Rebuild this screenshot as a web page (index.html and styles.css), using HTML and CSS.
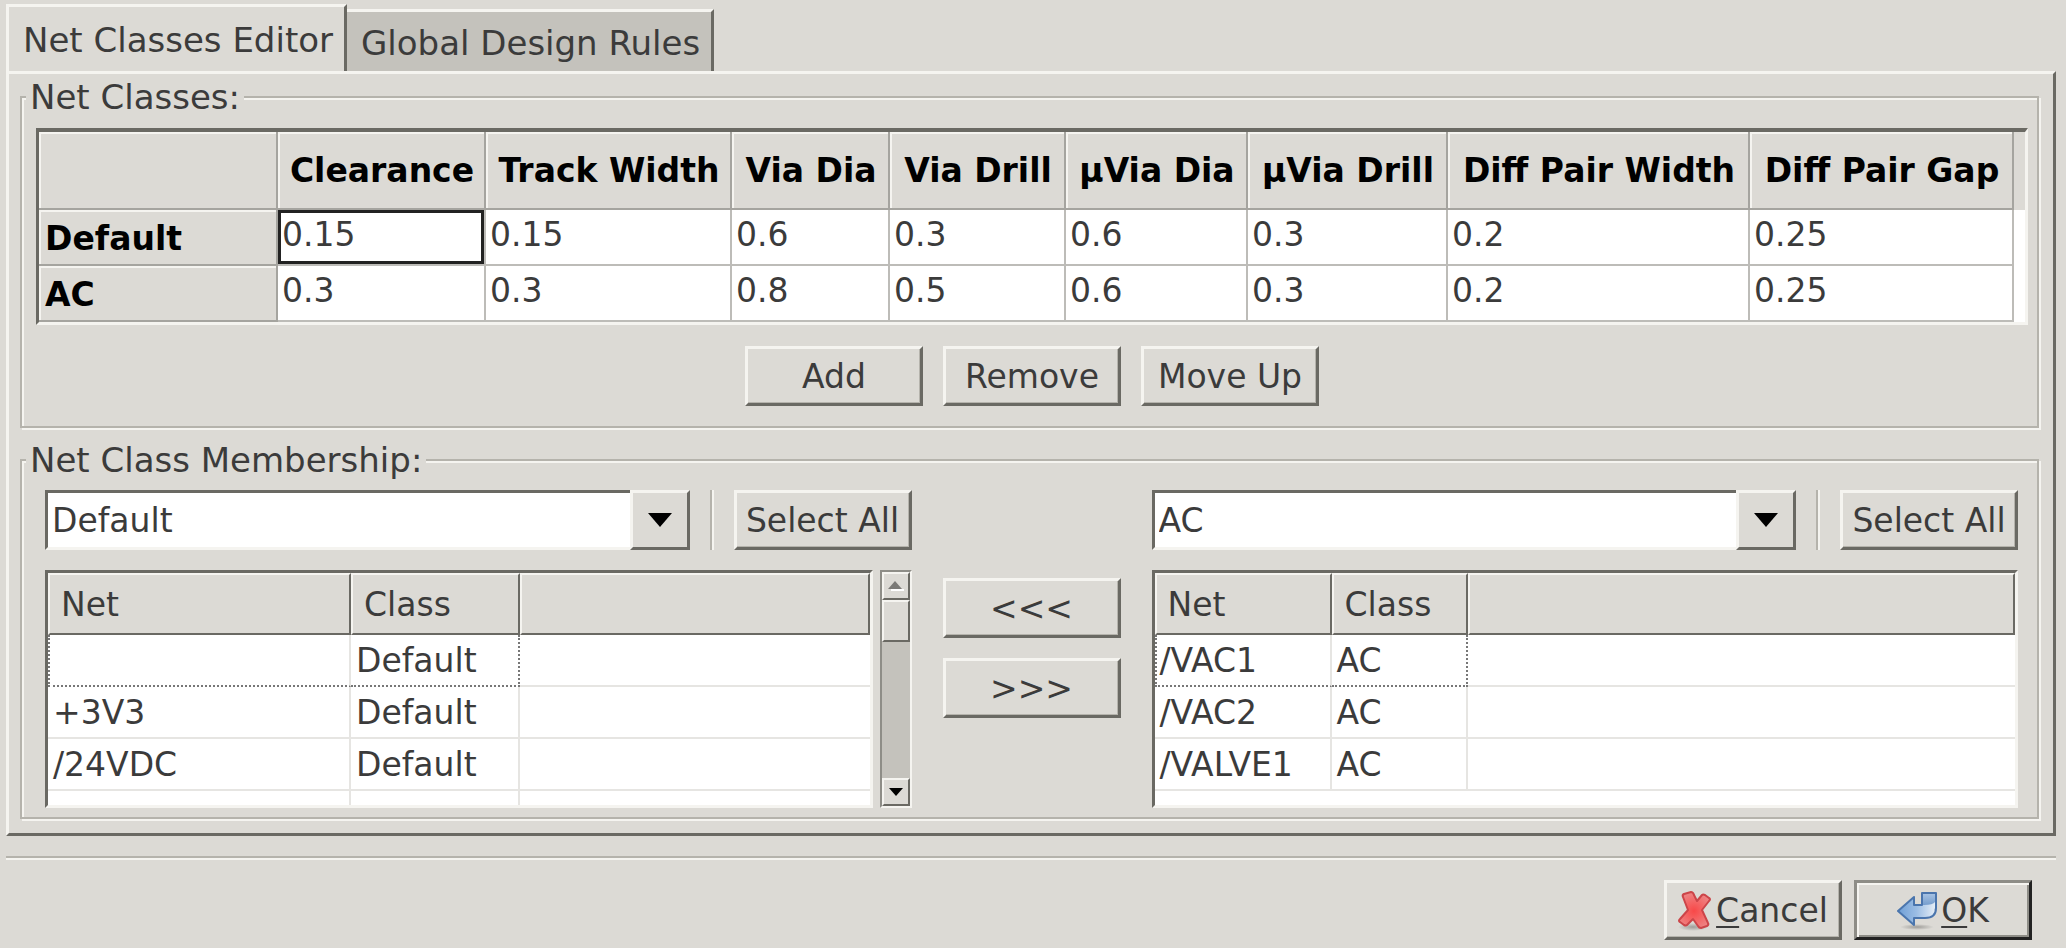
FILE: index.html
```html
<!DOCTYPE html>
<html lang="en">
<head>
<meta charset="utf-8">
<title>Net Classes Editor</title>
<link rel="stylesheet" href="styles.css">
</head>
<body>
<div class="tabs" role="tablist">
  <button class="tab tab-active" role="tab" aria-selected="true" type="button">Net Classes Editor</button>
  <button class="tab" role="tab" aria-selected="false" type="button">Global Design Rules</button>
</div>
<main class="panel">
  <fieldset class="group">
    <legend>Net Classes:</legend>
    <div class="grid-frame">
      <table class="grid">
        <colgroup>
          <col class="g0"><col class="g1"><col class="g2"><col class="g3"><col class="g4"><col class="g5"><col class="g6"><col class="g7"><col class="g8"><col>
        </colgroup>
        <thead>
          <tr><td class="corner"></td><th>Clearance</th><th>Track Width</th><th>Via Dia</th><th>Via Drill</th><th>µVia Dia</th><th>µVia Drill</th><th>Diff Pair Width</th><th>Diff Pair Gap</th><td class="rest"></td></tr>
        </thead>
        <tbody>
          <tr><th scope="row">Default</th><td class="cursor">0.15</td><td>0.15</td><td>0.6</td><td>0.3</td><td>0.6</td><td>0.3</td><td>0.2</td><td>0.25</td><td class="blank"></td></tr>
          <tr><th scope="row">AC</th><td>0.3</td><td>0.3</td><td>0.8</td><td>0.5</td><td>0.6</td><td>0.3</td><td>0.2</td><td>0.25</td><td class="blank"></td></tr>
        </tbody>
      </table>
    </div>
    <div class="actions">
      <button class="btn" type="button">Add</button>
      <button class="btn" type="button">Remove</button>
      <button class="btn" type="button">Move Up</button>
    </div>
  </fieldset>

  <fieldset class="group members">
    <legend>Net Class Membership:</legend>
    <section class="side">
      <div class="picker">
        <div class="combo">
          <select aria-label="Left net class"><option>Default</option><option>AC</option></select>
          <span class="combo-arrow"><svg width="24" height="14" viewBox="0 0 24 14"><path d="M0 0H24L12 14Z"/></svg></span>
        </div>
        <span class="vline"></span>
        <button class="btn" type="button">Select All</button>
      </div>
      <div class="list-row">
        <div class="list">
          <table class="nets">
            <colgroup><col class="n-left"><col class="c-left"><col></colgroup>
            <thead><tr><th>Net</th><th>Class</th><th></th></tr></thead>
            <tbody>
              <tr class="current"><td></td><td>Default</td><td></td></tr>
              <tr><td>+3V3</td><td>Default</td><td></td></tr>
              <tr><td>/24VDC</td><td>Default</td><td></td></tr>
              <tr><td></td><td></td><td></td></tr>
            </tbody>
          </table>
        </div>
        <div class="scrollbar">
          <button class="step" type="button" aria-label="Scroll up" disabled><svg width="16" height="12" viewBox="0 0 16 12"><path d="M3 9H16V11H3Z" fill="#fff"/><path d="M0 9H14L7 1Z" fill="#7b7a77"/></svg></button>
          <div class="thumb"></div>
          <div class="trough"></div>
          <button class="step" type="button" aria-label="Scroll down"><svg width="14" height="8" viewBox="0 0 14 8"><path d="M0 0H14L7 8Z"/></svg></button>
        </div>
      </div>
    </section>
    <div class="movers">
      <button class="btn" type="button">&lt;&lt;&lt;</button>
      <button class="btn" type="button">&gt;&gt;&gt;</button>
    </div>
    <section class="side">
      <div class="picker">
        <div class="combo">
          <select aria-label="Right net class"><option>AC</option><option>Default</option></select>
          <span class="combo-arrow"><svg width="24" height="14" viewBox="0 0 24 14"><path d="M0 0H24L12 14Z"/></svg></span>
        </div>
        <span class="vline"></span>
        <button class="btn" type="button">Select All</button>
      </div>
      <div class="list-row">
        <div class="list">
          <table class="nets">
            <colgroup><col class="n-right"><col class="c-right"><col></colgroup>
            <thead><tr><th>Net</th><th>Class</th><th></th></tr></thead>
            <tbody>
              <tr class="current"><td>/VAC1</td><td>AC</td><td></td></tr>
              <tr><td>/VAC2</td><td>AC</td><td></td></tr>
              <tr><td>/VALVE1</td><td>AC</td><td></td></tr>
            </tbody>
          </table>
        </div>
      </div>
    </section>
  </fieldset>
</main>
<hr class="rule">
<footer class="footer">
  <button class="btn" type="button">
    <svg class="icon" width="34" height="40" viewBox="0 0 34 40"><defs><radialGradient id="sh"><stop offset="0" stop-color="#000" stop-opacity=".28"/><stop offset="1" stop-color="#000" stop-opacity="0"/></radialGradient><radialGradient id="rd" gradientUnits="userSpaceOnUse" cx="16" cy="20" r="18"><stop offset="0" stop-color="#f84848"/><stop offset=".5" stop-color="#f46464"/><stop offset="1" stop-color="#ee8282"/></radialGradient></defs><ellipse cx="15" cy="36" rx="15" ry="4" fill="url(#sh)"/><path d="M6 3L13 1Q15 1 16 4L19 10L24 4Q25 3 27 4L31 7Q33 8 31 10L24 19L30 32Q31 34 29 35L23 37Q21 37 20 35L15 28L9 34Q8 35 6 34L2 31Q0 30 2 28L10 19L5 6Q4 4 6 3Z" fill="url(#rd)" stroke="#cc4549" stroke-width="2" stroke-linejoin="round"/></svg><span><u>C</u>ancel</span>
  </button>
  <button class="btn btn-default" type="button">
    <svg class="icon" width="40" height="40" viewBox="0 0 40 40"><defs><linearGradient id="bl" x1="0" y1="0" x2="1" y2="0"><stop offset="0" stop-color="#6f9fd6"/><stop offset=".5" stop-color="#9bbde4"/><stop offset="1" stop-color="#e4edf6"/></linearGradient><linearGradient id="fold" x1="0" y1="0" x2="0" y2="1"><stop offset="0" stop-color="#a9c4e4"/><stop offset="1" stop-color="#5f8dc4"/></linearGradient></defs><ellipse cx="20" cy="36" rx="17" ry="3" fill="url(#sh)"/><path d="M25 14V2H39V19H25Z" fill="url(#fold)"/><path d="M1 20L17 6V14H27Q36 14 38 11V17Q38 27 28 27H17V34Z" fill="url(#bl)"/><path d="M1 20L17 6V14H25V2H39V17Q39 27 28 27H17V34Z" fill="none" stroke="#4a75ad" stroke-width="2" stroke-linejoin="round"/></svg><span><u>O</u>K</span>
  </button>
</footer>
</body>
</html>
```
FILE: styles.css
```css
:root {
  --bg: #dcdad5;
  --light: #f5f4f0;
  --dark: #6a6963;
  --mid: #b5b3ac;
  --line: #bdbcb8;
  --faint: #e6e5e2;
  --text: #3b3b3b;
}
* { box-sizing: border-box; }
body {
  margin: 0;
  padding: 4px 10px 8px 6px;
  background: var(--bg);
  color: var(--text);
  font: 33px/40px "DejaVu Sans", sans-serif;
}
button, select { font: inherit; color: inherit; margin: 0; }

.tabs { display: flex; align-items: flex-end; font-size: 34px; }
.tab {
  height: 62px;
  padding: 2px 11px 0 14px;
  border: 3px solid var(--light);
  border-right-color: var(--dark);
  border-bottom: 0;
  border-left: 0;
  background: #c4c2bc;
  white-space: nowrap;
}
.tab-active {
  height: 67px;
  border-left: 3px solid var(--light);
  background: var(--bg);
}
.panel {
  border: 3px solid var(--light);
  border-right-color: var(--dark);
  border-bottom-color: var(--dark);
  padding: 3px 14px 14px 11px;
}

.group {
  min-width: 0;
  margin: 0;
  padding: 11px 9px 20px 14px;
  border: 2px solid var(--mid);
  box-shadow: 2px 2px 0 var(--light), inset 2px 2px 0 var(--light);
}
.group + .group { margin-top: 12px; }
legend { padding: 0 4px; margin-left: -10px; background: var(--bg); font-size: 34px; }
.members legend { margin-left: -19px; }

.grid-frame {
  border: 3px solid var(--light);
  border-top: 4px solid var(--dark);
  border-left-color: var(--dark);
}
.grid, .nets { width: 100%; table-layout: fixed; border-collapse: separate; border-spacing: 0; }
.grid { background: #fff; }
.grid .g0 { width: 239px; }
.grid .g1 { width: 208px; }
.grid .g2 { width: 246px; }
.grid .g3 { width: 158px; }
.grid .g4 { width: 176px; }
.grid .g5 { width: 182px; }
.grid .g6 { width: 200px; }
.grid .g7 { width: 302px; }
.grid .g8 { width: 264px; }
.grid th, .grid td { padding: 0 0 4px 4px; height: 56px; border: 0 solid var(--line); border-width: 0 2px 2px 0; text-align: left; }
.grid th, .grid .corner {
  background: var(--bg);
  color: #000;
  border-color: #a5a49f;
  box-shadow: inset 2px 2px 0 var(--light);
  white-space: nowrap;
}
.grid thead th, .grid .corner { height: 78px; padding: 2px 0 0 2px; text-align: center; }
.grid tbody th { padding: 4px 0 0 6px; }
.grid .cursor { box-shadow: inset 0 0 0 3px #222; }
.grid .rest { background: var(--bg); border: 0; }
.grid .blank { border: 0; }

.actions { display: flex; justify-content: center; gap: 20px; margin-top: 21px; }
.btn {
  width: 178px;
  height: 60px;
  padding: 2px 0 0;
  border: 3px solid var(--dark);
  border-top-color: var(--light);
  border-left-color: var(--light);
  background: var(--bg);
  box-shadow: inset -1px -1px 0 var(--mid);
  white-space: nowrap;
}

.members { display: grid; grid-template-columns: 1fr 178px 1fr; column-gap: 31px; padding: 10px 19px 9px 23px; }
.picker { display: flex; }
.combo { position: relative; flex: 1; display: flex; height: 60px; }
.combo select {
  appearance: none;
  width: 100%;
  padding: 2px 64px 0 4px;
  border: 3px solid var(--light);
  border-top-color: var(--dark);
  border-left-color: var(--dark);
  border-radius: 0;
  background: #fff;
}
.combo-arrow {
  position: absolute;
  inset: 0 0 0 auto;
  width: 60px;
  display: flex;
  align-items: center;
  justify-content: center;
  border: 3px solid var(--dark);
  border-top-color: var(--light);
  border-left-color: var(--light);
  background: var(--bg);
  pointer-events: none;
}
.vline { width: 4px; margin: 0 20px; border-left: 2px solid var(--mid); border-right: 2px solid var(--light); }

.list-row { display: flex; gap: 7px; margin-top: 20px; }
.list {
  flex: 1;
  height: 238px;
  overflow: hidden;
  border: 3px solid var(--light);
  border-top-color: var(--dark);
  border-left-color: var(--dark);
  background: #fff;
}
.n-left { width: 303px; }
.c-left { width: 169px; }
.n-right { width: 177px; }
.c-right { width: 136px; }
.nets th {
  height: 62px;
  padding: 1px 0 0 11px;
  border: 2px solid var(--dark);
  border-top-color: var(--light);
  border-left-color: var(--light);
  background: var(--bg);
  font-weight: 400;
  text-align: left;
}
.nets td { height: 52px; padding: 2px 0 0 5px; border: 0 solid var(--faint); border-width: 0 2px 2px 0; }
.nets td:last-child { border-right: 0; }
.nets .current td { border-bottom: 2px dotted #777; }
.nets .current td:first-child { border-left: 2px dotted #777; padding-left: 3px; }
.nets .current td:nth-child(2) { border-right: 2px dotted #777; }
.nets .current td:last-child { border-bottom: 2px solid var(--faint); }

.scrollbar {
  width: 32px;
  display: flex;
  flex-direction: column;
  border: 2px solid var(--light);
  border-top-color: #8e8d87;
  border-left-color: #8e8d87;
}
.step, .thumb {
  padding: 0;
  height: 28px;
  border: 2px solid var(--dark);
  border-top-color: var(--light);
  border-left-color: var(--light);
  background: var(--bg);
  display: flex;
  align-items: center;
  justify-content: center;
}
.thumb { height: 42px; }
.trough { flex: 1; background: #c4c2bc; }

.movers { display: flex; flex-direction: column; gap: 20px; padding-top: 88px; }

.rule { margin: 20px 0 0; border: 0; border-top: 2px solid var(--mid); border-bottom: 2px solid var(--light); }
.footer { display: flex; justify-content: flex-end; gap: 12px; margin-top: 20px; padding-right: 24px; }
.footer .btn { display: flex; align-items: center; justify-content: center; gap: 4px; }
.footer u { text-decoration-thickness: 2px; text-underline-offset: 4px; }
.btn-default { border-color: #8e8d87 #222 #222 #8e8d87; box-shadow: inset 2px 2px 0 var(--light), inset -2px -2px 0 #8e8d87; }
```
